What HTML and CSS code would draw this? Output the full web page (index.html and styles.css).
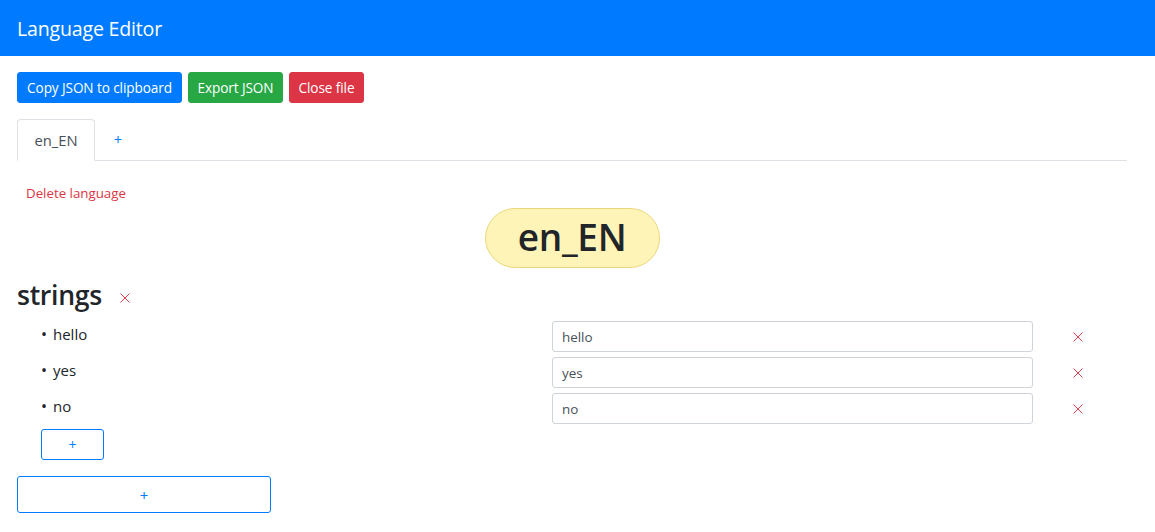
FILE: index.html
```html
<!DOCTYPE html>
<html>
<head>
<meta charset="utf-8">
<title>Language Editor</title>
<link rel="stylesheet" href="styles.css">
</head>
<body>
<header class="navbar"><span class="brand">Language Editor</span></header>
<main class="container">
  <div class="toolbar">
    <button class="btn btn-primary">Copy JSON to clipboard</button>
    <button class="btn btn-success">Export JSON</button>
    <button class="btn btn-danger">Close file</button>
  </div>
  <nav class="tabs">
    <a class="tab active">en_EN</a>
    <a class="tab add">+</a>
  </nav>
  <div class="tab-content">
    <button class="link-danger">Delete language</button>
    <div class="badge-row"><span class="lang-badge">en_EN</span></div>
    <div class="section-head">
      <h3 class="section-title">strings</h3>
      <span class="x-icon x-head"><svg width="10" height="10" viewBox="0 0 10 10"><path d="M0.5 0.5L9.5 9.5M9.5 0.5L0.5 9.5" stroke="#e4404f" stroke-width="1" fill="none"/></svg></span>
    </div>
    <ul class="entries">
      <li class="entry"><span class="key"><span class="dot">•</span>hello</span><input class="field" value="hello"><span class="x-icon"><svg width="10" height="10" viewBox="0 0 10 10"><path d="M0.5 0.5L9.5 9.5M9.5 0.5L0.5 9.5" stroke="#e4404f" stroke-width="1" fill="none"/></svg></span></li>
      <li class="entry"><span class="key"><span class="dot">•</span>yes</span><input class="field" value="yes"><span class="x-icon"><svg width="10" height="10" viewBox="0 0 10 10"><path d="M0.5 0.5L9.5 9.5M9.5 0.5L0.5 9.5" stroke="#e4404f" stroke-width="1" fill="none"/></svg></span></li>
      <li class="entry"><span class="key"><span class="dot">•</span>no</span><input class="field" value="no"><span class="x-icon"><svg width="10" height="10" viewBox="0 0 10 10"><path d="M0.5 0.5L9.5 9.5M9.5 0.5L0.5 9.5" stroke="#e4404f" stroke-width="1" fill="none"/></svg></span></li>
    </ul>
    <button class="btn-outline small-add">+</button>
    <button class="btn-outline big-add">+</button>
  </div>
</main>
</body>
</html>
```
FILE: styles.css
```css
* { box-sizing: border-box; }
html, body { margin: 0; padding: 0; }
body {
  font-family: "Open Sans", "Noto Sans", sans-serif;
  color: #212529;
  background: #fff;
  font-size: 15px;
  width: 1155px;
  height: 532px;
  overflow: hidden;
}
.navbar {
  height: 56px;
  background: #007bff;
  display: flex;
  align-items: center;
  padding: 0 17px;
}
.brand {
  color: #fff;
  font-size: 19.6px;
  letter-spacing: -0.2px;
}
.container {
  width: 1110px;
  margin-left: 17px;
}
.toolbar {
  display: flex;
  gap: 6px;
  margin-top: 16px;
}
.btn {
  font-family: inherit;
  font-size: 13.6px;
  height: 31px;
  padding: 0 6px;
  border: 1px solid transparent;
  border-radius: 3px;
  color: #fff;
  cursor: pointer;
  letter-spacing: -0.1px;
}
.btn-primary { background: #007bff; border-color: #007bff; width: 165px; }
.btn-success { background: #28a745; border-color: #28a745; width: 95px; }
.btn-danger { background: #dc3545; border-color: #dc3545; width: 75px; }
.tabs {
  display: flex;
  margin-top: 16px;
  border-bottom: 1px solid #dee2e6;
  height: 42px;
}
.tab {
  height: 42px;
  display: flex;
  align-items: center;
  justify-content: center;
  font-size: 14.8px;
  border: 1px solid transparent;
  border-top-left-radius: 4px;
  border-top-right-radius: 4px;
}
.tab.active {
  width: 78px;
  color: #495057;
  border-color: #dee2e6 #dee2e6 #fff;
  background: #fff;
}
.tab.add {
  width: 46px;
  color: #007bff;
  padding-bottom: 2px;
}
.tab-content {
  display: flex;
  flex-direction: column;
}
.link-danger {
  align-self: flex-start;
  font-family: inherit;
  background: none;
  border: none;
  color: #dc3545;
  font-size: 13.3px;
  height: 31px;
  padding: 0 9px;
  margin-top: 16px;
  cursor: pointer;
}
.badge-row {
  display: flex;
  justify-content: center;
}
.lang-badge {
  width: 175px;
  height: 60px;
  border-radius: 30px;
  background: #fff4b8;
  border: 1px solid #e9d87a;
  display: flex;
  align-items: center;
  justify-content: center;
  font-size: 37px;
  font-weight: 600;
  color: #212529;
  padding-bottom: 3px;
  letter-spacing: -0.3px;
}
.section-head {
  display: flex;
  align-items: center;
  margin-top: 11px;
  height: 32px;
}
.section-title {
  margin: 0;
  font-size: 26.6px;
  font-weight: 600;
  line-height: 32px;
  letter-spacing: -0.3px;
}
.x-icon {
  display: inline-flex;
  width: 10px;
  height: 10px;
}
.x-head {
  margin-left: 18px;
  margin-top: 6px;
}
.entries {
  list-style: none;
  margin: 10px 0 0;
  padding: 0;
  display: flex;
  flex-direction: column;
  gap: 5px;
}
.entry {
  display: flex;
  align-items: center;
  height: 31px;
}
.key {
  width: 535px;
  padding-left: 24px;
  font-size: 15px;
  margin-top: -6px;
  display: flex;
  align-items: center;
}
.dot {
  width: 12px;
  font-size: 16px;
  line-height: 1;
}
.field {
  width: 481px;
  height: 31px;
  border: 1px solid #ced4da;
  border-radius: 3px;
  padding: 0 9px;
  font-family: inherit;
  font-size: 13.4px;
  color: #495057;
}
.entry .x-icon {
  margin-left: 40px;
}
.btn-outline {
  font-family: inherit;
  background: #fff;
  border: 1px solid #007bff;
  color: #007bff;
  border-radius: 3px;
  cursor: pointer;
  align-self: flex-start;
}
.small-add {
  width: 63px;
  height: 31px;
  margin-left: 24px;
  margin-top: 5px;
  font-size: 14px;
}
.big-add {
  width: 254px;
  height: 37px;
  margin-top: 16px;
  font-size: 15px;
}
```
